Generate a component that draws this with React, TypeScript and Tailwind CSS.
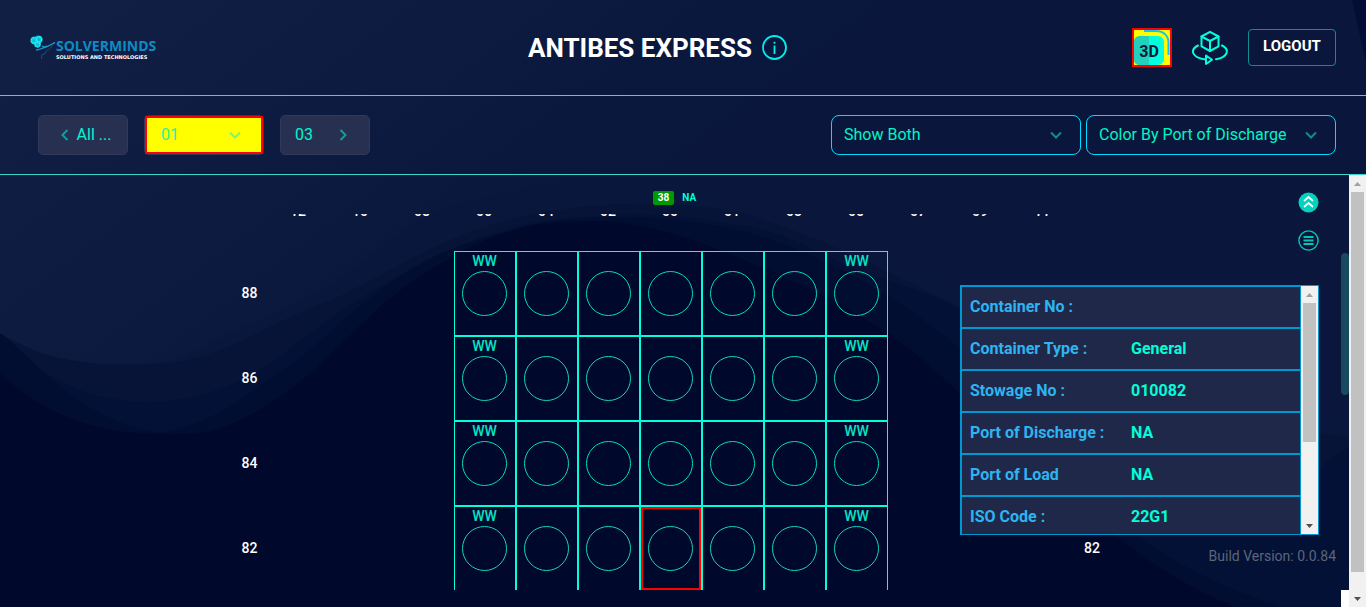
import type { ReactNode } from "react";

const columns = ["12", "10", "08", "06", "04", "02", "00", "01", "03", "05", "07", "09", "11"];
const cellColumns = ["06", "04", "02", "00", "01", "03", "05"];
const tiers = [
  { id: "88", right: "" },
  { id: "86", right: "" },
  { id: "84", right: "" },
  { id: "82", right: "82" },
];

const details = [
  { label: "Container No :", value: "" },
  { label: "Container Type :", value: "General" },
  { label: "Stowage No :", value: "010082" },
  { label: "Port of Discharge :", value: "NA" },
  { label: "Port of Load", value: "NA" },
  { label: "ISO Code :", value: "22G1" },
];

function Backdrop() {
  return (
    <svg
      className="absolute inset-0 -z-10 h-full w-full"
      viewBox="0 0 1366 607"
      preserveAspectRatio="none"
      aria-hidden="true"
    >
      <defs>
        <linearGradient id="sky" gradientUnits="userSpaceOnUse" x1="0" y1="60" x2="330" y2="500">
          <stop offset="0" stopColor="#111f44" />
          <stop offset="0.35" stopColor="#0f1c41" />
          <stop offset="0.7" stopColor="#0b183d" />
          <stop offset="1" stopColor="#0a163b" />
        </linearGradient>
      </defs>
      <rect width="1366" height="607" fill="#00082c" />
      <path
        d="M0 0H1366V607H1235C1190 588 1150 565 1114 534C1050 475 1010 430 960 394C935 370 910 348 888 333C858 314 825 295 796 283C760 266 735 256 704 244C670 232 630 221 600 221C570 221 545 222 520 228C495 235 475 244 459 253C420 275 395 292 367 319C335 350 310 377 276 399C245 420 215 434 184 434C168 435 155 434 138 433C90 430 40 412 0 373Z"
        fill="#020d32"
      />
      <path
        d="M0 0H1366V607H1280C1230 590 1185 570 1140 538C1070 470 1010 390 960 349C915 310 870 283 827 263C795 248 765 236 735 229C680 217 630 215 582 219C560 220 540 222 520 228C485 238 455 246 429 259C395 278 365 300 337 326C310 350 290 367 263 383C230 410 200 425 162 433C110 425 75 402 37 366C22 352 10 340 0 333Z"
        fill="#041136"
      />
      <path
        d="M0 0H1366V440C1340 450 1325 462 1317 472C1200 440 1100 420 1020 345C960 300 900 285 850 268C800 240 760 225 735 225C680 213 630 212 582 217C530 218 470 240 429 259C395 278 365 295 337 314C290 345 240 402 147 402C100 402 60 385 37 366C22 352 10 340 0 333Z"
        fill="#071438"
      />
      <path
        d="M0 0H1366V440C1240 420 1130 395 1050 350C960 310 900 275 850 255C800 230 760 210 680 205C600 200 520 210 450 240C400 262 360 290 318 305C245 335 215 364 147 364C90 364 60 360 37 352C22 345 10 338 0 333Z"
        fill="#0a173c"
      />
      <path
        d="M0 0H1366V430C1200 400 1050 330 920 275C830 245 780 225 735 209C700 192 660 179 612 179C575 179 545 182 520 189C485 197 455 203 429 213C385 240 355 270 318 293C270 315 245 326 215 340C190 355 170 363 147 364H101C60 360 30 352 0 333Z"
        fill="url(#sky)"
      />
      <path d="M1352 0H1366V62Z" fill="#030d35" />
    </svg>
  );
}

function Chevron({ d, className }: { d: string; className?: string }) {
  return (
    <svg className={className} viewBox="0 0 12 12" width="12" height="12" fill="none" stroke="currentColor" strokeWidth="2" aria-hidden="true">
      <path d={d} />
    </svg>
  );
}

const DOWN = "M1 3.5L6 8.5L11 3.5";
const LEFT = "M8.500 1L3.500 6L8.500 11";
const RIGHT = "M3.500 1L8.500 6L3.500 11";

function Logo() {
  return (
    <a href="#" aria-label="Solverminds home" className="flex w-[153px] items-center">
      <svg width="26" height="26" viewBox="0 0 26 26" fill="none" aria-hidden="true">
        <g fill="#0fb9cf">
          <circle cx="4.500" cy="5.500" r="4" />
          <circle cx="8.500" cy="4.500" r="4" />
          <circle cx="7.500" cy="9" r="3.500" />
        </g>
        <g stroke="#1cf2f5" strokeWidth="1.600">
          <circle cx="4" cy="5.500" r="2.600" strokeDasharray="1.500 0.600" />
          <circle cx="9" cy="4.500" r="2.600" strokeDasharray="1.800 0.600" />
          <circle cx="7.500" cy="9.500" r="2.200" strokeDasharray="1.500 0.600" />
        </g>
        <path d="M6 15C13 14 18 11 25 7.500" stroke="#1d8fc0" strokeWidth="1.400" />
        <path d="M23 9C21 14 18 15 16 16L15 19L12 19.500L11.500 24" stroke="#14507f" strokeWidth="1" />
        <path d="M12 11C14 13 15 12 17 11" stroke="#1a9fc8" strokeWidth="1.200" />
      </svg>
      <span className="flex flex-col pt-1 whitespace-nowrap">
        <span className="h-4 font-['Open_Sans',sans-serif] text-[14px] leading-4 font-bold text-[#0d8cc4]">SOLVERMINDS</span>
        <span className="h-2 font-['DejaVu_Sans',sans-serif] text-[5px] leading-[6px] font-bold text-white">SOLUTIONS AND TECHNOLOGIES</span>
      </span>
    </a>
  );
}

function ThreeDIcon() {
  return (
    <svg width="36" height="35" viewBox="0 0 36 35" aria-hidden="true">
      <path d="M10 1H22C30 1 34.500 6 34.500 13V25" fill="none" stroke="#10c4f5" strokeWidth="2" />
      <rect x="0" y="6" width="30" height="29" rx="6" fill="#00ffdc" />
      <path d="M15 6H6Q0 6 0 12V29Q0 35 6 35H15Z" fill="#22d0bd" />
      <text x="15" y="26.500" textAnchor="middle" fontSize="16" fontWeight="700" fill="#0a1b3d" fontFamily="Roboto, sans-serif">3D</text>
    </svg>
  );
}

function RotateCubeIcon() {
  return (
    <svg width="36" height="36" viewBox="1192 30 36 36" fill="none" stroke="#00ffdc" strokeWidth="2" strokeLinejoin="round" strokeLinecap="round" aria-hidden="true">
      <path d="M1210 31.800L1218.500 36.500V46.300L1210 51L1201.500 46.300V36.500Z" />
      <path d="M1201.500 36.500L1210 41L1218.500 36.500M1210 41V51" />
      <path d="M1198 45.500C1190 49.500 1191 57.500 1205.700 59.500" />
      <path d="M1222 45.500C1230 49.500 1228 57 1216 59.200" />
      <path d="M1206 55.500L1212 59.700L1206 64Z" />
    </svg>
  );
}

function ScrollTrack({ children }: { children: ReactNode }) {
  return (
    <div className="flex w-[17px] shrink-0 flex-col bg-[#f1f1f1]" aria-hidden="true">
      <span className="flex h-[17px] items-center justify-center">
        <svg width="7" height="4" viewBox="0 0 7 4"><path d="M0 4L3.500 0L7 4Z" fill="#a0a0a0" /></svg>
      </span>
      <div className="min-h-0 flex-1 px-[2px]">{children}</div>
      <span className="flex h-[17px] items-center justify-center">
        <svg width="7" height="4" viewBox="0 0 7 4"><path d="M0 0L3.500 4L7 0Z" fill="#505050" /></svg>
      </span>
    </div>
  );
}

function Header() {
  return (
    <header className="flex h-24 shrink-0 items-center justify-between border-b border-[#38d9cd] px-[30px]">
      <Logo />
      <div className="flex items-center gap-[10px]">
        <h1 className="text-[26px] leading-8 font-bold text-white">ANTIBES EXPRESS</h1>
        <button type="button" aria-label="Vessel information">
          <svg width="25" height="25" viewBox="0 0 25 25" fill="none" stroke="#00f0f0" strokeWidth="1.800" aria-hidden="true">
            <circle cx="12.500" cy="12.500" r="11.500" />
            <path d="M12.500 10.500V19M12.500 6.800V8.800" />
          </svg>
        </button>
      </div>
      <div className="flex items-center gap-5">
        <button type="button" aria-label="3D view" className="border-2 border-[#ff0000] bg-[#ffff00]">
          <ThreeDIcon />
        </button>
        <button type="button" aria-label="Rotate view">
          <RotateCubeIcon />
        </button>
        <button type="button" className="h-[37px] w-[88px] rounded border border-[#118c92] pb-[2px] text-[15px] font-bold text-white">
          LOGOUT
        </button>
      </div>
    </header>
  );
}

function FilterSelect({ label, value }: { label: string; value: string }) {
  return (
    <div className="relative w-[250px]">
      <select
        aria-label={label}
        className="h-10 w-full appearance-none rounded-lg border border-[#00dcff] bg-transparent pr-8 pl-3 text-[16px] text-[#00f5c8]"
      >
        <option>{value}</option>
      </select>
      <Chevron d={DOWN} className="pointer-events-none absolute top-[14px] right-[19px] text-[#0b8f97]" />
    </div>
  );
}

function Toolbar() {
  return (
    <div className="flex h-[79px] shrink-0 items-center justify-between border-b border-[#38d9cd] pr-[30px] pl-[38px] text-[16px] text-[#00f5d0]">
      <nav className="flex gap-4" aria-label="Bays">
        <button type="button" className="flex h-10 w-[90px] items-center justify-center gap-[6px] rounded-[5px] border border-[#313859] bg-[#283052] pl-1">
          <Chevron d={LEFT} className="text-[#159b9b]" />
          All ...
        </button>
        <div className="relative h-10 w-[120px] rounded-[5px] border border-[#313859]">
          <select aria-label="Bay" className="h-[38px] w-full appearance-none border-2 border-[#ff0000] bg-[#ffff00] pl-[14px] text-[16px] text-[#35efa0]">
            <option>01</option>
          </select>
          <Chevron d={DOWN} className="pointer-events-none absolute top-[13px] right-[22px] text-[#84f070]" />
        </div>
        <button type="button" className="flex h-10 w-[90px] items-center justify-between rounded-[5px] border border-[#313859] bg-[#283052] pr-5 pl-[14px]">
          03
          <Chevron d={RIGHT} className="text-[#159b9b]" />
        </button>
      </nav>
      <div className="flex gap-[5px]">
        <FilterSelect label="Display" value="Show Both" />
        <FilterSelect label="Color by" value="Color By Port of Discharge" />
      </div>
    </div>
  );
}

function Slot({ ww, selected }: { ww: boolean; selected: boolean }) {
  return (
    <div className="flex h-[85px] w-[62px] border border-[#00ffdc]">
      <div
        className={
          selected
            ? "flex w-full flex-col pt-[2px] pl-[7px] outline-2 -outline-offset-2 outline-[#ff0000]"
            : "flex w-full flex-col pt-[2px] pl-[7px]"
        }
      >
        <span className="h-[17px] w-[45px] text-center text-[14px] leading-[14px] font-medium text-[#08e3c8]">{ww ? "WW" : ""}</span>
        <span className="h-[45px] w-[45px] rounded-full border border-[#08d8c0]" />
      </div>
    </div>
  );
}

function BayPlan() {
  return (
    <div className="flex min-h-0 flex-1">
      <div className="min-w-0 flex-1 overflow-hidden text-[14px] font-medium text-white">
        <div className="mx-auto -mt-[13px] w-[879px]">
          <div className="flex h-[50px] pl-9 leading-5">
            {columns.map((c) => (
              <span key={c} className="w-[62px] text-center">{c}</span>
            ))}
          </div>
          {tiers.map((tier) => (
            <div key={tier.id} className="flex items-center justify-between">
              <span className="w-[37px] text-center">{tier.id}</span>
              <div className="flex">
                {cellColumns.map((c) => (
                  <Slot key={c} ww={c === "06" || c === "05"} selected={tier.id === "82" && c === "00"} />
                ))}
              </div>
              <span className="w-[36px] text-center">{tier.right}</span>
            </div>
          ))}
        </div>
      </div>
      <div className="w-2 pt-[39px]" aria-hidden="true">
        <div className="h-[142px] rounded bg-[#184a5e]" />
      </div>
    </div>
  );
}

function DetailsPanel() {
  return (
    <section className="flex h-[250px] w-[359px] border border-[#0098d0] bg-[#1f2848]" aria-label="Container details">
      <div className="min-w-0 flex-1 overflow-hidden">
        <table className="w-full table-fixed border-separate border-spacing-0 text-[16px] font-bold">
          <tbody>
            {details.map((d) => (
              <tr key={d.label} className="h-[42px]">
                <th scope="row" className="w-[162px] border-y border-l border-[#0098d0] px-2 py-0 text-left font-bold text-[#2db4f2]">{d.label}</th>
                <td className="border-y border-r border-[#0098d0] px-2 py-0 text-[#00ffd8]">{d.value}</td>
              </tr>
            ))}
          </tbody>
        </table>
      </div>
      <ScrollTrack>
        <div className="h-[65%] bg-[#c1c1c1]" />
      </ScrollTrack>
    </section>
  );
}

export default function App() {
  return (
    <div className="relative isolate flex h-screen flex-col overflow-hidden font-[Roboto,sans-serif]">
      <Backdrop />
      <Header />
      <Toolbar />
      <main className="flex min-h-0 flex-1">
        <div className="relative flex min-w-0 flex-1 flex-col">
          <div className="flex h-[39px] shrink-0 items-start justify-center gap-2 pt-4 text-[10px] leading-[14px] font-bold">
            <span className="rounded-[2px] bg-[#009a00] px-[5px] text-white">38</span>
            <span className="text-[#00ffd8]">NA</span>
          </div>
          <BayPlan />
          <div className="flex h-[17px] shrink-0 justify-end" aria-hidden="true">
            <span className="w-2 bg-white" />
          </div>
          <div className="absolute top-[17px] right-[30px] flex flex-col items-end">
            <button type="button" aria-label="Collapse" className="mb-[17px]">
              <svg width="21" height="21" viewBox="0 0 21 21" fill="none" aria-hidden="true">
                <circle cx="10.500" cy="10.500" r="10" fill="#00d2be" />
                <path d="M6 9L10.500 5L15 9M6 15L10.500 11L15 15" stroke="#fff" strokeWidth="1.700" />
              </svg>
            </button>
            <button type="button" aria-label="Show list" className="mb-[34px]">
              <svg width="21" height="21" viewBox="0 0 21 21" fill="none" stroke="#00c8b4" aria-hidden="true">
                <circle cx="10.500" cy="10.500" r="9.600" strokeWidth="1.400" />
                <path d="M5.500 7H15.500M5.500 10.500H15.500M5.500 14H15.500" strokeWidth="1.800" />
              </svg>
            </button>
            <DetailsPanel />
          </div>
          <p className="absolute right-[13px] bottom-[41px] text-[14px] leading-5 text-[#5c6579]">Build Version: 0.0.84</p>
        </div>
        <ScrollTrack>
          <div className="h-[95.5%] bg-[#c1c1c1]" />
        </ScrollTrack>
      </main>
    </div>
  );
}
